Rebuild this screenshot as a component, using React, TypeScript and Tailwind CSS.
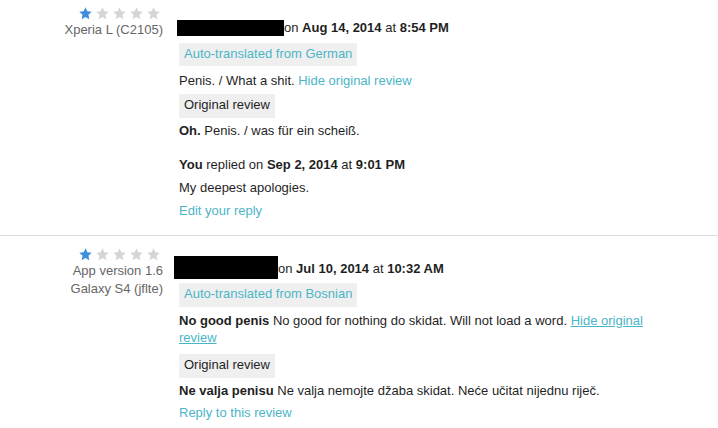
import React from "react";

const Star = ({ on }: { on: boolean }) => (
  <svg width="13" height="13" viewBox="0 0 24 24" className="block">
    <polygon
      points="12,0.5 15.4,8 23.5,8.8 17.4,14.3 19.1,22.5 12,18.3 4.9,22.5 6.6,14.3 0.5,8.8 8.6,8"
      fill={on ? "#3f8ede" : "#d5d5d5"}
    />
  </svg>
);

const Stars = () => (
  <div className="flex justify-end gap-[4px] pr-[3px] h-[14px] items-start">
    <Star on />
    <Star on={false} />
    <Star on={false} />
    <Star on={false} />
    <Star on={false} />
  </div>
);

const teal = "text-[#4cb5c7]";

export default function App() {
  return (
    <div
      className="w-[718px] h-[428px] bg-white overflow-hidden text-[13px] text-[#1f1f1f]"
      style={{ fontFamily: '"Liberation Sans", Arial, Helvetica, sans-serif' }}
    >
      {/* Review 1 */}
      <div className="flex pt-[7px] pb-[16px] border-b border-[#dddddd]">
        <div className="w-[163px] shrink-0 text-right text-[#666] leading-[18px]">
          <Stars />
          <div>Xperia L (C2105)</div>
        </div>
        <div className="flex-1 ml-[16px] pr-[50px] pt-[12px] leading-[17px]">
          <div className="flex items-center h-[17px] whitespace-nowrap">
            <span className="inline-block bg-black w-[107px] h-[16px] ml-[-2px]" />
            <span>
              on <b>Aug 14, 2014</b> at <b>8:54 PM</b>
            </span>
          </div>
          <div className="mt-[7px]">
            <span className={`inline-block bg-[#efefef] px-[5px] pt-[2px] pb-[4px] ${teal}`}>
              Auto-translated from German
            </span>
          </div>
          <p className="mt-[6px]">
            Penis. / What a shit. <span className={teal}>Hide original review</span>
          </p>
          <div className="mt-[5px]">
            <span className="inline-block bg-[#efefef] px-[5px] pt-[2px] pb-[5px]">
              Original review
            </span>
          </div>
          <p className="mt-[4px]">
            <b>Oh.</b> Penis. / was für ein scheiß.
          </p>
          <p className="mt-[17px]">
            <b>You</b> replied on <b>Sep 2, 2014</b> at <b>9:01 PM</b>
          </p>
          <p className="mt-[6px]">My deepest apologies.</p>
          <p className={`mt-[6px] ${teal}`}>Edit your reply</p>
        </div>
      </div>

      {/* Review 2 */}
      <div className="flex pt-[12px]">
        <div className="w-[163px] shrink-0 text-right text-[#666] leading-[18px]">
          <Stars />
          <div>App version 1.6</div>
          <div>Galaxy S4 (jflte)</div>
        </div>
        <div className="flex-1 ml-[16px] pr-[50px] pt-[12px] leading-[17px]">
          <div className="flex items-center h-[17px] whitespace-nowrap">
            <span className="inline-block bg-black w-[104px] h-[23px] ml-[-5px] -translate-y-px" />
            <span>
              on <b>Jul 10, 2014</b> at <b>10:32 AM</b>
            </span>
          </div>
          <div className="mt-[6px]">
            <span className={`inline-block bg-[#efefef] px-[5px] pt-[2px] pb-[5px] ${teal}`}>
              Auto-translated from Bosnian
            </span>
          </div>
          <p className="mt-[5px]">
            <b>No good penis</b> No good for nothing do skidat. Will not load a word.{" "}
            <span className={`${teal} underline`}>Hide original</span>{" "}
            <span className={`${teal} underline`}>review</span>
          </p>
          <div className="mt-[8px]">
            <span className="inline-block bg-[#efefef] px-[5px] pt-[2px] pb-[5px]">
              Original review
            </span>
          </div>
          <p className="mt-[4px]">
            <b>Ne valja penisu</b> Ne valja nemojte džaba skidat. Neće učitat nijednu riječ.
          </p>
          <p className={`mt-[5px] ${teal}`}>Reply to this review</p>
        </div>
      </div>
    </div>
  );
}
